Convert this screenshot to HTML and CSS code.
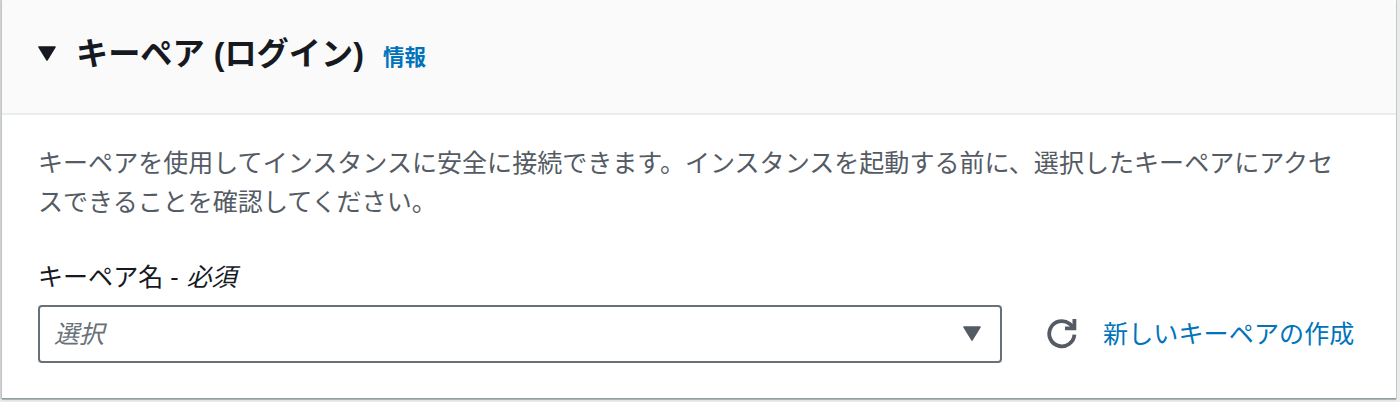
FILE: index.html
```html
<!DOCTYPE html>
<html lang="ja">
<head>
    <meta charset="UTF-8">
    <meta name="viewport" content="width=device-width, initial-scale=1.0">
    <title>キーペア (ログイン)</title>
    <link rel="stylesheet" href="styles.css">
</head>
<body>
    <section class="panel">
        <div class="panel-header">
            <svg class="caret" viewBox="0 0 18 15"><path d="M1 1H17L9 14Z"/></svg>
            <h2>キーペア (ログイン)</h2>
            <a class="info">情報</a>
        </div>
        <div class="panel-body">
            <p class="description">キーペアを使用してインスタンスに安全に接続できます。インスタンスを起動する前に、選択したキーペアにアクセスできることを確認してください。</p>
            <div class="label">キーペア名 - <em>必須</em></div>
            <div class="row">
                <div class="select">
                    <span class="placeholder">選択</span>
                    <svg class="caret" viewBox="0 0 18 15"><path d="M1 1H17L9 14Z"/></svg>
                </div>
                <svg class="refresh" viewBox="0 0 30 30">
                    <path d="M27.4 15.6A12.6 12.6 0 1 1 22.5 4.7L26 8"/>
                    <path d="M27.4 0V9.3H18"/>
                </svg>
                <a class="create">新しいキーペアの作成</a>
            </div>
        </div>
    </section>
</body>
</html>
```

FILE: styles.css
```css
*{
    margin: 0;
    padding: 0;
    box-sizing: border-box;
}
body{
    height: 402px;
    padding: 0 4px 4px 2px;
    overflow: hidden;
    background-color: #eaecec;
    font-family: "Liberation Sans", "Noto Sans CJK JP", sans-serif;
    font-size: 25.06px;
    color: #16191f;
}
.panel{
    height: 398px;
    background-color: #fff;
    box-shadow: 0 1px 1px #929c9f, 0 2px 1px #b4bbbd, -1px 0 0 1px #cfd2d2, 0 0 0 1px #cfd4d5;
}
.panel-header{
    display: flex;
    align-items: center;
    height: 115px;
    padding: 0 36px 6px 36px;
    background-color: #fafafa;
    border-bottom: 2px solid #eaeded;
}
.caret{
    width: 18px;
    height: 15px;
    fill: currentColor;
    stroke: currentColor;
    stroke-width: 1.5;
    stroke-linejoin: round;
}
h2{
    margin-left: 20px;
    font-size: 32.2px;
    line-height: 40px;
    font-weight: bold;
}
.info{
    margin: 8px 0 0 19px;
    font-size: 21.5px;
    line-height: 30px;
    font-weight: bold;
    color: #0073bb;
}
.panel-body{
    padding: 29px 36px 0;
}
.description{
    padding-right: 10px;
    line-height: 39.4px;
    color: #545b64;
}
.label{
    margin-top: 35px;
    line-height: 39px;
}
.label em{
    margin-left: 1px;
}
.row{
    display: flex;
    align-items: center;
    margin-top: 8px;
}
.select{
    display: flex;
    align-items: center;
    justify-content: space-between;
    width: 964px;
    height: 58px;
    padding: 0 19px 0 14px;
    border: 2px solid #687078;
    border-radius: 4px;
    color: #545b64;
}
.placeholder{
    padding-bottom: 3px;
    font-style: italic;
    color: #687078;
}
.refresh{
    width: 30px;
    height: 30px;
    margin: 0 26px 0 45px;
    fill: none;
    stroke: #545b64;
    stroke-width: 3.8;
}
.create{
    padding-bottom: 4px;
    letter-spacing: 0.1px;
    color: #0073bb;
    white-space: nowrap;
}
```
